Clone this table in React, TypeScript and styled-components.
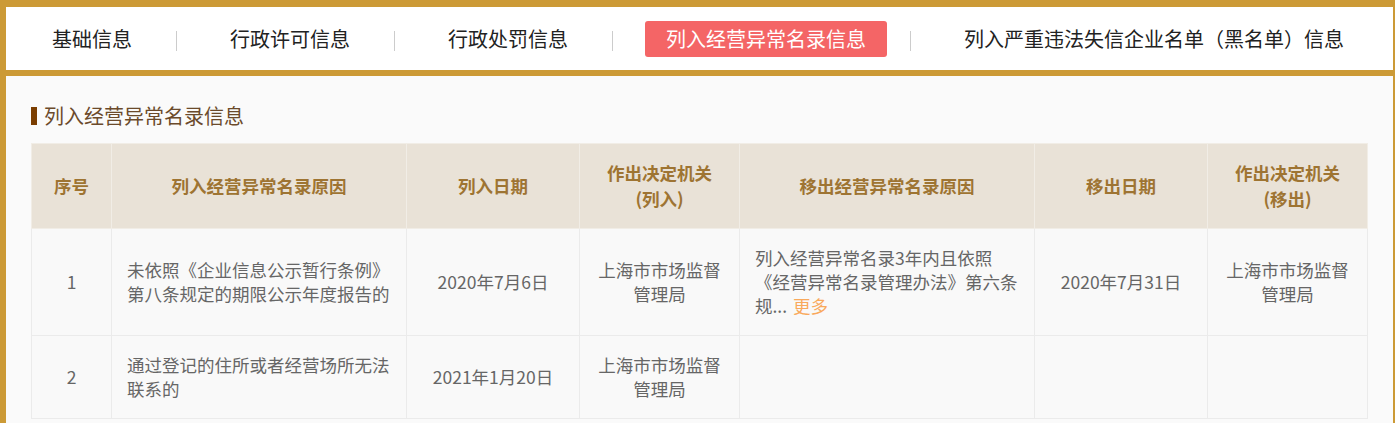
import React from "react";
import styled, { createGlobalStyle } from "styled-components";

const GlobalStyle = createGlobalStyle`
  html, body {
    margin: 0;
    padding: 0;
    background: #ffffff;
  }
  body {
    font-family: "Noto Sans CJK SC", "Noto Sans", sans-serif;
  }
  * { box-sizing: border-box; }
`;

const GOLD = "#cc9a36";

const Frame = styled.div`
  width: 1395px;
  border-top: 7px solid ${GOLD};
  border-left: 6px solid ${GOLD};
  border-right: 2px solid ${GOLD};
  background: #fafafa;
  min-height: 423px;
`;

const Nav = styled.nav`
  height: 63px;
  background: #ffffff;
  border-bottom: 6px solid ${GOLD};
  display: flex;
  align-items: center;
  padding-left: 25px;
  box-sizing: content-box;
`;

const Tab = styled.div<{ $active?: boolean }>`
  height: 36px;
  padding: 0 21px;
  display: flex;
  align-items: center;
  font-size: 20px;
  line-height: 36px;
  white-space: nowrap;
  border-radius: 3px;
  color: ${(p) => (p.$active ? "#ffffff" : "#222222")};
  background: ${(p) => (p.$active ? "#f46566" : "transparent")};
`;

const Sep = styled.span`
  width: 1px;
  height: 20px;
  background: #cccccc;
  margin: 4px 32px 0 23px;
`;

const Content = styled.section`
  padding: 28px 26px 20px 25px;
`;

const Title = styled.h3`
  margin: 0 0 15px;
  display: flex;
  align-items: center;
  gap: 7px;
  font-size: 20px;
  font-weight: normal;
  line-height: 24px;
  color: #6b4a2b;
  &::before {
    content: "";
    width: 6px;
    height: 18px;
    background: #7a3d00;
  }
`;

const Table = styled.table`
  width: 1336px;
  border-collapse: collapse;
  table-layout: fixed;
`;

const Th = styled.th`
  background: #e9e2d7;
  color: #9e7432;
  font-size: 17.5px;
  font-weight: bold;
  line-height: 26px;
  padding: 16px 8px;
  text-align: center;
  border: 1px solid #f1ede6;
  height: 84px;
`;

const Td = styled.td<{ $left?: boolean }>`
  color: #666666;
  font-size: 17.5px;
  line-height: 24px;
  padding: 17px 15px;
  text-align: ${(p) => (p.$left ? "left" : "center")};
  border: 1px solid #ebebeb;
  background: #f9f9f9;
`;

const More = styled.a`
  color: #f9a95c;
  text-decoration: none;
  margin-left: 6px;
  cursor: pointer;
`;

const tabs = [
  "基础信息",
  "行政许可信息",
  "行政处罚信息",
  "列入经营异常名录信息",
  "列入严重违法失信企业名单（黑名单）信息",
];

const widths = [80, 295, 173, 160, 295, 173, 160];

export default function App() {
  return (
    <>
      <GlobalStyle />
      <Frame>
        <Nav>
          {tabs.map((t, i) => (
            <React.Fragment key={t}>
              {i > 0 && <Sep />}
              <Tab $active={i === 3}>{t}</Tab>
            </React.Fragment>
          ))}
        </Nav>
        <Content>
          <Title>列入经营异常名录信息</Title>
          <Table>
            <colgroup>
              {widths.map((w, i) => (
                <col key={i} style={{ width: w }} />
              ))}
            </colgroup>
            <thead>
              <tr>
                <Th>序号</Th>
                <Th>列入经营异常名录原因</Th>
                <Th>列入日期</Th>
                <Th>
                  作出决定机关
                  <br />
                  (列入)
                </Th>
                <Th>移出经营异常名录原因</Th>
                <Th>移出日期</Th>
                <Th>
                  作出决定机关
                  <br />
                  (移出)
                </Th>
              </tr>
            </thead>
            <tbody>
              <tr>
                <Td>1</Td>
                <Td $left>未依照《企业信息公示暂行条例》第八条规定的期限公示年度报告的</Td>
                <Td>2020年7月6日</Td>
                <Td>上海市市场监督管理局</Td>
                <Td $left>
                  列入经营异常名录3年内且依照
                  <br />
                  《经营异常名录管理办法》第六条
                  <br />
                  规...<More>更多</More>
                </Td>
                <Td>2020年7月31日</Td>
                <Td>上海市市场监督管理局</Td>
              </tr>
              <tr>
                <Td>2</Td>
                <Td $left>通过登记的住所或者经营场所无法联系的</Td>
                <Td>2021年1月20日</Td>
                <Td>上海市市场监督管理局</Td>
                <Td $left></Td>
                <Td></Td>
                <Td></Td>
              </tr>
            </tbody>
          </Table>
        </Content>
      </Frame>
    </>
  );
}
